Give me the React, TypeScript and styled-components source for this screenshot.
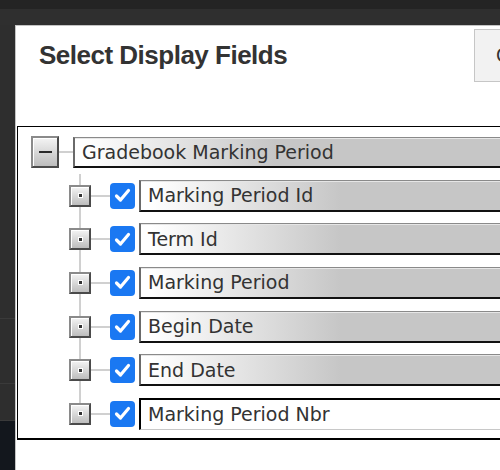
import React from "react";
import styled, { createGlobalStyle } from "styled-components";

const GlobalStyle = createGlobalStyle`
  html, body {
    margin: 0;
    padding: 0;
    overflow: hidden;
    background: #2d2d2d;
  }
`;

const Page = styled.div`
  width: 500px;
  height: 470px;
  display: grid;
  grid-template-rows: 25px 1fr;
  overflow: hidden;
`;

const TopBar = styled.div`
  box-sizing: border-box;
  background: #2f2f2f;
  border-top: 9px solid #242424;
`;

const Body = styled.div`
  display: flex;
  min-height: 0;
`;

const LeftStrip = styled.div`
  flex: 0 0 15px;
  display: flex;
  flex-direction: column;
`;

const StripBlock = styled.div<{ $h?: number; $navy?: boolean }>`
  flex: ${(p) => (p.$h ? `0 0 ${p.$h}px` : "1")};
  background: ${(p) => (p.$navy ? "#13171d" : "#2e2e2e")};
  border-bottom: ${(p) => (p.$navy ? "none" : "1px solid #3a3a3a")};
`;

const Dialog = styled.div`
  flex: 0 0 640px;
  background: #fff;
  border-left: 1px solid #c4c4c4;
  border-top: 1px solid #c4c4c4;
  display: flex;
  flex-direction: column;
`;

const Header = styled.div`
  height: 100px;
  display: flex;
  align-items: flex-start;
`;

const Title = styled.h2`
  box-sizing: border-box;
  flex: 0 0 458px;
  margin: 0;
  padding: 16px 0 0 23px;
  font-family: "Liberation Sans", Arial, sans-serif;
  font-weight: bold;
  font-size: 26px;
  line-height: 26px;
  letter-spacing: -0.5px;
  color: #333;
`;

const CloseButton = styled.button`
  margin-top: 3px;
  width: 90px;
  height: 53px;
  padding: 0 0 0 21px;
  text-align: left;
  background: #f2f2f2;
  border: 1px solid #c6c6c6;
  font-family: "Liberation Sans", Arial, sans-serif;
  font-size: 20px;
  color: #333;
`;

const TreeBox = styled.div`
  margin-left: 1px;
  height: 314px;
  box-sizing: border-box;
  border: 1px solid #000;
  border-bottom-width: 2px;
  padding: 9px 0 0 13px;
`;

const RootRow = styled.div`
  display: flex;
  align-items: center;
  height: 32px;
  margin-bottom: 6px;
`;

const Expander = styled.span<{ $big?: boolean }>`
  box-sizing: border-box;
  flex: none;
  width: ${(p) => (p.$big ? "28px" : "22px")};
  height: ${(p) => (p.$big ? "32px" : "22px")};
  display: flex;
  align-items: center;
  justify-content: center;
  border: 2px solid;
  border-color: #8a8a8a #4a4a4a #4a4a4a #8a8a8a;
  background: linear-gradient(#f4f4f4, #bdbdbd);
  box-shadow: inset 1px 1px 0 #fff;
`;

const Minus = styled.span`
  width: 13px;
  height: 2px;
  background: #2a2a2a;
`;

const Dot = styled.span`
  width: 3px;
  height: 3px;
  background: #333;
  box-shadow: 0 0 0 1px #fff;
`;

const Connector = styled.span<{ $w: number }>`
  flex: none;
  width: ${(p) => p.$w}px;
  height: 2px;
  background: #d0d0d0;
`;

const Label = styled.div<{ $selected?: boolean; $h: number }>`
  box-sizing: border-box;
  flex: 1;
  height: ${(p) => p.$h}px;
  display: flex;
  align-items: center;
  padding-left: 7px;
  font-family: "DejaVu Sans", Verdana, sans-serif;
  font-size: 19px;
  color: #333;
  white-space: nowrap;
  ${(p) =>
    p.$selected
      ? `
    background: #fff;
    border-top: 2px solid #000;
    border-left: 2px solid #000;
    border-bottom: 1px solid #c8c8c8;
  `
      : `
    background: linear-gradient(90deg, #fff 10px, #c6c6c6 200px);
    border-top: 1px solid #8a8a8a;
    border-left: 2px solid #6a6a6a;
    border-bottom: 2px solid #111;
    box-shadow: inset 0 1px 0 #e6e6e6;
  `}
`;

const ChildList = styled.div`
  margin-left: 38px;
  display: flex;
  flex-direction: column;
`;

const ChildRow = styled.div`
  display: flex;
  align-items: center;
  height: 43.6px;
`;

const Rail = styled.div<{ $last?: boolean }>`
  flex: none;
  width: 22px;
  align-self: stretch;
  display: flex;
  align-items: center;
  background: linear-gradient(#d0d0d0, #d0d0d0) no-repeat center top /
    2px ${(p) => (p.$last ? "50%" : "100%")};
`;

const CheckBox = styled.span`
  flex: none;
  width: 25px;
  height: 26px;
  margin-right: 4px;
  border-radius: 4px;
  background: #1a78f2;
  display: flex;
  align-items: center;
  justify-content: center;
`;

const Check = () => (
  <svg width="19" height="19" viewBox="0 0 19 19">
    <path
      d="M3.5 10 L7.5 14 L15.5 4.5"
      fill="none"
      stroke="#fff"
      strokeWidth="3.2"
      strokeLinecap="round"
      strokeLinejoin="round"
    />
  </svg>
);

const fields = [
  "Marking Period Id",
  "Term Id",
  "Marking Period",
  "Begin Date",
  "End Date",
  "Marking Period Nbr",
];

export default function App() {
  return (
    <>
      <GlobalStyle />
      <Page>
        <TopBar />
        <Body>
          <LeftStrip>
            <StripBlock $h={293} />
            <StripBlock $h={64} />
            <StripBlock $h={36} />
            <StripBlock $navy />
          </LeftStrip>
          <Dialog>
            <Header>
              <Title>Select Display Fields</Title>
              <CloseButton>Close</CloseButton>
            </Header>
            <TreeBox>
              <RootRow>
                <Expander $big>
                  <Minus />
                </Expander>
                <Connector $w={14} />
                <Label $h={31}>Gradebook Marking Period</Label>
              </RootRow>
              <ChildList>
                {fields.map((f, i) => (
                  <ChildRow key={f}>
                    <Rail $last={i === fields.length - 1}>
                      <Expander>
                        <Dot />
                      </Expander>
                    </Rail>
                    <Connector $w={19} />
                    <CheckBox>
                      <Check />
                    </CheckBox>
                    <Label $h={32} $selected={i === fields.length - 1}>
                      {f}
                    </Label>
                  </ChildRow>
                ))}
              </ChildList>
            </TreeBox>
          </Dialog>
        </Body>
      </Page>
    </>
  );
}
